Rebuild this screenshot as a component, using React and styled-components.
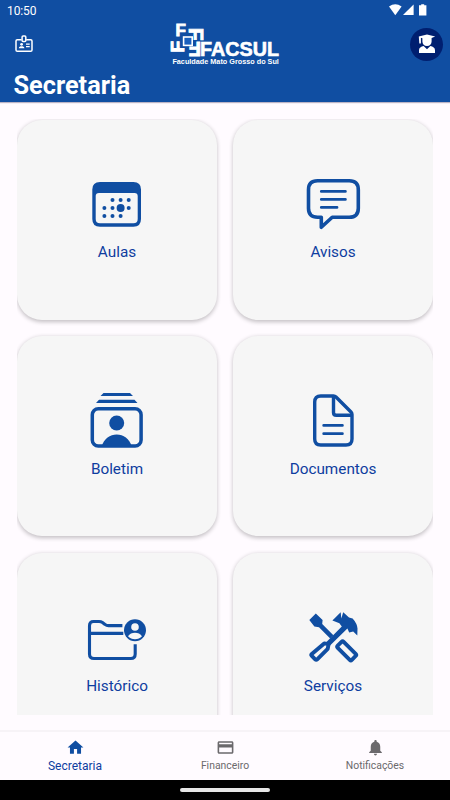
import React from "react";
import styled, { createGlobalStyle } from "styled-components";
import { MdHome, MdNotifications, MdOutlineCreditCard } from "react-icons/md";

const BLUE = "#104ea2";

const CalendarIcon = () => (
	<CardIcon viewBox="0 0 60 60">
		<path
			fillRule="evenodd"
			fill={BLUE}
			d="M13 8H46.4Q54 8 54 15.5V45Q54 52.7 46.4 52.7H13Q5.3 52.7 5.3 45V15.5Q5.3 8 13 8ZM8.7 22V45Q8.7 49.3 13 49.3H46.4Q50.7 49.3 50.7 45V22Q50.7 18.9 47.5 18.9H12Q8.7 18.9 8.7 22Z"
		/>
		<g fill={BLUE}>
			<circle cx="25.5" cy="26" r="2" />
			<circle cx="33.6" cy="26" r="2" />
			<circle cx="41.7" cy="26" r="2" />
			<circle cx="17.4" cy="34" r="2" />
			<circle cx="25.5" cy="34" r="2" />
			<circle cx="33.6" cy="34" r="4" />
			<circle cx="41.7" cy="34" r="2" />
			<circle cx="17.4" cy="42" r="2" />
			<circle cx="25.5" cy="42" r="2" />
			<circle cx="33.6" cy="42" r="2" />
		</g>
	</CardIcon>
);

const MessageIcon = () => (
	<CardIcon viewBox="0 0 60 60">
		<g fill="none" stroke={BLUE} strokeLinejoin="round" strokeLinecap="round">
			<path
				strokeWidth="3.6"
				d="M14.5 6.8H46.3Q55.3 6.8 55.3 15.8V34.2Q55.3 43.2 46.3 43.2H29.2L18.3 53.3V43.2H14.5Q5.5 43.2 5.5 34.2V15.8Q5.5 6.8 14.5 6.8Z"
			/>
			<path strokeWidth="2.8" d="M18.3 17.4H42.4M18.3 25.4H42.4M18.3 33.4H34" />
		</g>
	</CardIcon>
);

const ReportIcon = () => (
	<CardIcon viewBox="0 0 60 60">
		<path fill={BLUE} d="M16.5 2H43L46 5.1H13.5ZM12 8.8H47.5L50.5 12.1H9Z" />
		<rect x="5.3" y="17.7" width="48.8" height="37.4" rx="6" fill="none" stroke={BLUE} strokeWidth="3.5" />
		<circle cx="29.7" cy="32" r="7.5" fill={BLUE} />
		<path fill={BLUE} d="M14.6 55.5C17 47.5 23 43.4 29.7 43.4S42.4 47.5 44.8 55.5Z" />
	</CardIcon>
);

const DocumentIcon = () => (
	<CardIcon viewBox="0 0 60 60">
		<g fill="none" stroke={BLUE} strokeWidth="3.4" strokeLinejoin="round">
			<path d="M17.7 5H30.5Q32 5 33 6L48 21Q49 22 49 23.5V48Q49 54 43 54H17.7Q11.7 54 11.7 48V11Q11.7 5 17.7 5Z" />
			<path d="M30.5 5V21.5Q30.5 24.3 33.3 24.3H49" />
			<path strokeWidth="2.8" strokeLinecap="round" d="M20.7 34.4H39.4M20.7 42.7H39.4" />
		</g>
	</CardIcon>
);

const FolderIcon = () => (
	<CardIcon viewBox="0 0 60 60">
		<path
			fill="none"
			stroke={BLUE}
			strokeWidth="3.1"
			d="M35.4 17.6H21.5Q19.5 17.6 18 16.4L15.5 14.5Q14 13.5 12 13.5H6.5Q2.5 13.5 2.5 17.5V46Q2.5 50.5 7 50.5H43.8Q48.2 50.5 48.2 46V36.3M2.5 25.4H36.3"
		/>
		<circle cx="48" cy="22.3" r="11" fill={BLUE} />
		<circle cx="48" cy="19" r="3.8" fill="#f6f6f6" />
		<path fill="#f6f6f6" d="M41 28.3C42.5 25.7 45.2 24.7 48 24.7S53.5 25.7 55 28.3C53.2 30.3 50.8 31.3 48 31.3S42.8 30.3 41 28.3Z" />
	</CardIcon>
);

const ToolsIcon = () => (
	<CardIcon viewBox="0 0 60 60">
		<path fill={BLUE} d="M12.8 5.4 19.6 12 19.2 16 30.4 27.2 27.2 30.4 16 19.2 11.4 18.6 6.3 12Z" />
		<path
			fill={BLUE}
			d="M37.7 4.3 38.3 10.4 40.2 4.3 46 9.6 49.6 10.4Q54.2 15.4 54.5 20.6L54.3 27.6 50.2 23.4 46.2 24.6 44.4 20.4 26.8 37.8 23.2 34.2 38.8 18.4 36.4 15.2 29.4 12.4Z"
		/>
		<g fill="none" stroke={BLUE} strokeWidth="3.9" strokeLinejoin="round">
			<path d="M21.2 35.4 25.6 36.2 24.7 40.8 14.2 51.3Q13.2 52.3 12.2 51.3L8.8 47.9Q7.8 46.9 8.8 45.9Z" />
			<rect x="-10" y="-4.2" width="20" height="8.4" rx="1.5" transform="translate(43.7 42.8) rotate(45)" />
		</g>
	</CardIcon>
);

const BadgeIcon = () => (
	<svg width="18" height="18" viewBox="0 0 18 18">
		<g fill="none" stroke="#fff" strokeWidth="1.5">
			<path d="M6.6 4.8H2.3Q1 4.8 1 6.1V14.9Q1 16.2 2.3 16.2H15.7Q17 16.2 17 14.9V6.1Q17 4.8 15.7 4.8H11.2" />
			<rect x="7.1" y="1" width="3.7" height="5.6" rx="1" />
			<path strokeWidth="1.2" d="M11 9.1H14.7M11 11.7H14.7" />
		</g>
		<circle cx="6.6" cy="9.3" r="1.4" fill="#fff" />
		<path fill="#fff" d="M3.8 13.2C4 11.8 5 11.2 6.6 11.2S9.2 11.8 9.4 13.2Z" />
	</svg>
);

const StudentIcon = () => (
	<svg width="18" height="20" viewBox="0 0 18 20">
		<g fill="#fff">
			<path d="M.8 2.6 9 .6 17.2 2.6 13.6 3.9V7.5C13.6 10.2 11.8 12 9 12S4.4 10.2 4.4 7.5V4.2L2.9 3.8V9.6H1.3Z" />
			<path d="M1 18.9V16.2C1 13.6 3 12.7 5.6 12L9 15.2 12.4 12C15 12.7 17 13.6 17 16.2V18.9Z" />
		</g>
	</svg>
);

const StatusIcons = () => (
	<svg width="39" height="12" viewBox="0 0 39 12">
		<g fill="#fff">
			<path d="M0 2.6Q6.3-2.2 12.6 2.6L6.3 11.2Z" />
			<path d="M14 11 24.6 .6V11Z" />
			<path d="M32.2 .2H35.2V1.3H37.4V11.6H30V1.3H32.2Z" />
		</g>
	</svg>
);

const Logo = () => (
	<LogoSvg viewBox="0 0 114 46">
		<g fill="#fff" stroke="#fff" fontFamily="Liberation Sans, sans-serif" fontWeight="700">
			<g strokeWidth=".9">
				<text x="7.5" y="14" fontSize="17">F</text>
				<text transform="translate(20.5 5.7) rotate(90)" fontSize="21">F</text>
				<text transform="translate(33.1 20.2) rotate(180)" fontSize="20">F</text>
				<text transform="translate(16 30.4) rotate(270)" fontSize="19">F</text>
			</g>
			<rect x="15.6" y="15" width="8.6" height="8.4" fill="#1a60bd" strokeWidth="1.6" />
			<text x="32" y="34.4" fontSize="20.2" textLength="79" lengthAdjust="spacingAndGlyphs" strokeWidth=".6">
				FACSUL
			</text>
			<text x="4.4" y="42.4" fontSize="7.8" textLength="106.5" lengthAdjust="spacingAndGlyphs" stroke="none">
				Faculdade Mato Grosso do Sul
			</text>
		</g>
	</LogoSvg>
);

const cards = [
	{ label: "Aulas", Icon: CalendarIcon },
	{ label: "Avisos", Icon: MessageIcon },
	{ label: "Boletim", Icon: ReportIcon },
	{ label: "Documentos", Icon: DocumentIcon },
	{ label: "Histórico", Icon: FolderIcon },
	{ label: "Serviços", Icon: ToolsIcon },
];

export default function App() {
	return (
		<Screen>
			<GlobalStyle />
			<Header>
				<StatusBar>
					<span>10:50</span>
					<StatusIcons />
				</StatusBar>
				<TopRow>
					<BadgeIcon />
					<Logo />
					<Avatar>
						<StudentIcon />
					</Avatar>
				</TopRow>
				<Title>Secretaria</Title>
			</Header>
			<Content>
				{cards.map(({ label, Icon }) => (
					<Card key={label}>
						<Icon />
						<CardLabel>{label}</CardLabel>
					</Card>
				))}
			</Content>
			<TabBar>
				<Tab $active>
					<MdHome size={19} />
					<span>Secretaria</span>
				</Tab>
				<Tab>
					<MdOutlineCreditCard size={19} />
					<span>Financeiro</span>
				</Tab>
				<Tab>
					<MdNotifications size={19} />
					<span>Notificações</span>
				</Tab>
			</TabBar>
			<SystemBar>
				<Handle />
			</SystemBar>
		</Screen>
	);
}

const GlobalStyle = createGlobalStyle`
	* {
		box-sizing: border-box;
	}
	body {
		margin: 0;
		background: #fffbff;
		font-family: Roboto, sans-serif;
	}
`;

const Screen = styled.div`
	width: 450px;
	height: 800px;
	display: flex;
	flex-direction: column;
	overflow: hidden;
	background: #fffbff;
`;

const Header = styled.header`
	height: 102px;
	flex-shrink: 0;
	background: ${BLUE};
	color: #fff;
	box-shadow: 0 1px 1px rgba(60, 50, 90, 0.35);
`;

const StatusBar = styled.div`
	height: 21px;
	padding: 0 20px 0 7px;
	display: flex;
	align-items: center;
	justify-content: space-between;
	font-size: 12px;
	letter-spacing: -0.1px;
	svg {
		margin: -1px 2px 0 0;
	}
`;

const TopRow = styled.div`
	height: 46px;
	padding: 0 7px 0 15px;
	display: flex;
	align-items: center;
	justify-content: space-between;
`;

const LogoSvg = styled.svg`
	width: 114px;
	height: 46px;
	margin: 1.4px 0 0 7px;
	overflow: visible;
`;

const Avatar = styled.div`
	width: 33px;
	height: 33px;
	border-radius: 50%;
	background: #001f70;
	display: flex;
	align-items: center;
	justify-content: center;
`;

const Title = styled.h1`
	margin: 0;
	padding-left: 13.5px;
	font-size: 25.3px;
	line-height: 37px;
	font-weight: 700;
`;

const Content = styled.main`
	height: 596px;
	flex-shrink: 0;
	margin: 17px 17px 0;
	padding-top: 0.5px;
	overflow: hidden;
	display: grid;
	grid-template-columns: 1fr 1fr;
	grid-auto-rows: 200px;
	gap: 16.8px 16px;
`;

const Card = styled.section`
	padding-top: 54.5px;
	display: flex;
	flex-direction: column;
	align-items: center;
	border-radius: 25px;
	background: #f6f6f6;
	box-shadow: 0 1.5px 4px rgba(0, 0, 0, 0.24);
`;

const CardIcon = styled.svg`
	width: 60px;
	height: 60px;
	flex-shrink: 0;
`;

const CardLabel = styled.span`
	margin-top: 6px;
	font-size: 15.3px;
	line-height: 24px;
	color: #0e3da0;
`;

const TabBar = styled.nav`
	height: 50px;
	flex-shrink: 0;
	margin-top: 15px;
	display: flex;
	border-top: 2px solid #f7f3f7;
`;

const Tab = styled.div`
	flex: 1;
	padding-top: 6px;
	display: flex;
	flex-direction: column;
	align-items: center;
	color: ${(props) => (props.$active ? BLUE : "#6b696c")};
	span {
		font-size: ${(props) => (props.$active ? "12px" : "10.4px")};
		line-height: 18px;
		color: ${(props) => (props.$active ? "#0e3da0" : "#6b696c")};
	}
`;

const SystemBar = styled.footer`
	height: 20px;
	flex-shrink: 0;
	display: flex;
	align-items: center;
	justify-content: center;
	background: #000;
`;

const Handle = styled.div`
	width: 90px;
	height: 4px;
	border-radius: 2px;
	background: #e6e6e6;
`;
